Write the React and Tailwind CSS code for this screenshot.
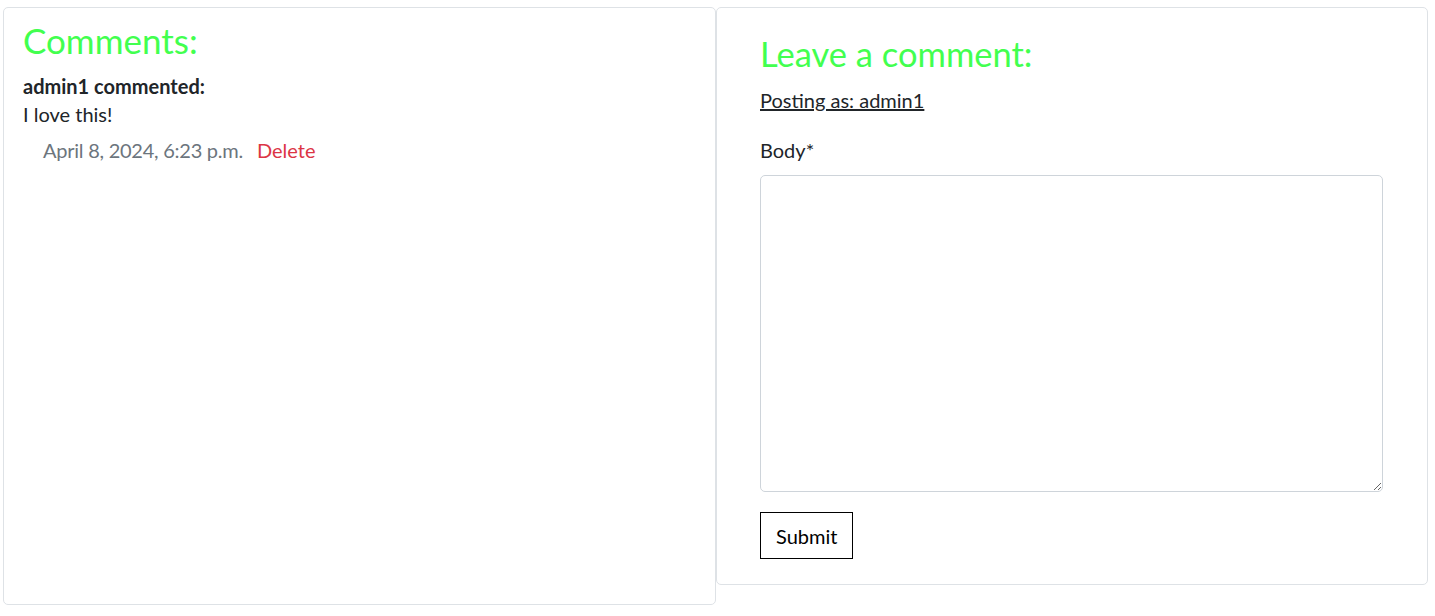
export default function App() {
  return (
    <div className="flex items-start pt-[7px] pl-[3px] bg-white text-[#212529]" style={{ fontFamily: 'Lato, "Open Sans", sans-serif' }}>
      <div className="w-[713px] h-[598px] border border-[#dee2e6] rounded-[5px] px-[19px] pt-[11px]">
        <h2 className="text-[35px] leading-[1.2] text-[#42ff4f] mb-[10px]">Comments:</h2>
        <p className="text-[20px] font-bold leading-[30px]">admin1 commented:</p>
        <p className="text-[20px] leading-[29px] mb-[6px] -mt-[1px]">I love this!</p>
        <div className="flex gap-[14px] pl-[20px] text-[20px] leading-[30px]">
          <span className="text-[#6c757d] tracking-[-0.25px]">April 8, 2024, 6:23 p.m.</span>
          <span className="text-[#dc3545]">Delete</span>
        </div>
      </div>
      <div className="w-[712px] h-[578px] border border-[#dee2e6] rounded-[5px] px-[43px] pt-[25px]">
        <h3 className="text-[34.5px] leading-[42px] text-[#42ff4f] mb-[10px]">Leave a comment:</h3>
        <p className="text-[20px] leading-[1.5] mb-[20px]"><span className="underline">Posting as: admin1</span></p>
        <label className="block text-[20px] leading-[1.5] mb-[10px]">Body<span>*</span></label>
        <textarea className="block w-[623px] h-[317px] border border-[#ced4da] rounded-[5px] mb-[20px]" />
        <button className="border border-black px-[15px] h-[47px] text-[20px] text-black">Submit</button>
      </div>
    </div>
  );
}
